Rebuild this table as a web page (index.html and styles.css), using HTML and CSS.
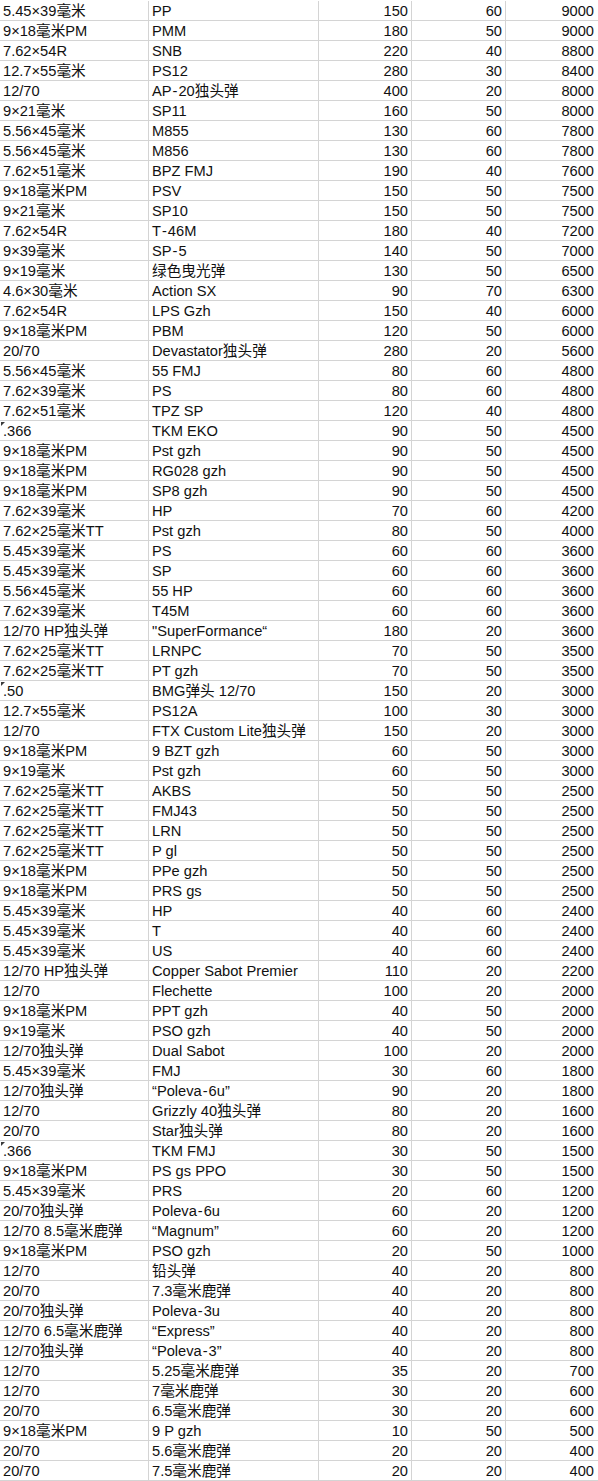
FILE: index.html
```html
<!DOCTYPE html>
<html lang="zh">
<head>
<meta charset="utf-8">
<title>弹药表</title>
<link rel="stylesheet" href="styles.css">
</head>
<body>
<div class="sheet">
<div class="row"><div class="t">5.45×39毫米</div><div class="t b">PP</div><div class="n">150</div><div class="n">60</div><div class="n e">9000</div></div>
<div class="row"><div class="t">9×18毫米PM</div><div class="t b">PMM</div><div class="n">180</div><div class="n">50</div><div class="n e">9000</div></div>
<div class="row"><div class="t">7.62×54R</div><div class="t b">SNB</div><div class="n">220</div><div class="n">40</div><div class="n e">8800</div></div>
<div class="row"><div class="t">12.7×55毫米</div><div class="t b">PS12</div><div class="n">280</div><div class="n">30</div><div class="n e">8400</div></div>
<div class="row"><div class="t">12/70</div><div class="t b">AP<span class="h">-</span>20独头弹</div><div class="n">400</div><div class="n">20</div><div class="n e">8000</div></div>
<div class="row"><div class="t">9×21毫米</div><div class="t b">SP11</div><div class="n">160</div><div class="n">50</div><div class="n e">8000</div></div>
<div class="row"><div class="t">5.56×45毫米</div><div class="t b">M855</div><div class="n">130</div><div class="n">60</div><div class="n e">7800</div></div>
<div class="row"><div class="t">5.56×45毫米</div><div class="t b">M856</div><div class="n">130</div><div class="n">60</div><div class="n e">7800</div></div>
<div class="row"><div class="t">7.62×51毫米</div><div class="t b">BPZ FMJ</div><div class="n">190</div><div class="n">40</div><div class="n e">7600</div></div>
<div class="row"><div class="t">9×18毫米PM</div><div class="t b">PSV</div><div class="n">150</div><div class="n">50</div><div class="n e">7500</div></div>
<div class="row"><div class="t">9×21毫米</div><div class="t b">SP10</div><div class="n">150</div><div class="n">50</div><div class="n e">7500</div></div>
<div class="row"><div class="t">7.62×54R</div><div class="t b">T<span class="h">-</span>46M</div><div class="n">180</div><div class="n">40</div><div class="n e">7200</div></div>
<div class="row"><div class="t">9×39毫米</div><div class="t b">SP<span class="h">-</span>5</div><div class="n">140</div><div class="n">50</div><div class="n e">7000</div></div>
<div class="row"><div class="t">9×19毫米</div><div class="t b">绿色曳光弹</div><div class="n">130</div><div class="n">50</div><div class="n e">6500</div></div>
<div class="row"><div class="t">4.6×30毫米</div><div class="t b">Action SX</div><div class="n">90</div><div class="n">70</div><div class="n e">6300</div></div>
<div class="row"><div class="t">7.62×54R</div><div class="t b">LPS Gzh</div><div class="n">150</div><div class="n">40</div><div class="n e">6000</div></div>
<div class="row"><div class="t">9×18毫米PM</div><div class="t b">PBM</div><div class="n">120</div><div class="n">50</div><div class="n e">6000</div></div>
<div class="row"><div class="t">20/70</div><div class="t b">Devastator独头弹</div><div class="n">280</div><div class="n">20</div><div class="n e">5600</div></div>
<div class="row"><div class="t">5.56×45毫米</div><div class="t b">55 FMJ</div><div class="n">80</div><div class="n">60</div><div class="n e">4800</div></div>
<div class="row"><div class="t">7.62×39毫米</div><div class="t b">PS</div><div class="n">80</div><div class="n">60</div><div class="n e">4800</div></div>
<div class="row"><div class="t">7.62×51毫米</div><div class="t b">TPZ SP</div><div class="n">120</div><div class="n">40</div><div class="n e">4800</div></div>
<div class="row"><div class="t flag">.366</div><div class="t b">TKM EKO</div><div class="n">90</div><div class="n">50</div><div class="n e">4500</div></div>
<div class="row"><div class="t">9×18毫米PM</div><div class="t b">Pst gzh</div><div class="n">90</div><div class="n">50</div><div class="n e">4500</div></div>
<div class="row"><div class="t">9×18毫米PM</div><div class="t b">RG028 gzh</div><div class="n">90</div><div class="n">50</div><div class="n e">4500</div></div>
<div class="row"><div class="t">9×18毫米PM</div><div class="t b">SP8 gzh</div><div class="n">90</div><div class="n">50</div><div class="n e">4500</div></div>
<div class="row"><div class="t">7.62×39毫米</div><div class="t b">HP</div><div class="n">70</div><div class="n">60</div><div class="n e">4200</div></div>
<div class="row"><div class="t">7.62×25毫米TT</div><div class="t b">Pst gzh</div><div class="n">80</div><div class="n">50</div><div class="n e">4000</div></div>
<div class="row"><div class="t">5.45×39毫米</div><div class="t b">PS</div><div class="n">60</div><div class="n">60</div><div class="n e">3600</div></div>
<div class="row"><div class="t">5.45×39毫米</div><div class="t b">SP</div><div class="n">60</div><div class="n">60</div><div class="n e">3600</div></div>
<div class="row"><div class="t">5.56×45毫米</div><div class="t b">55 HP</div><div class="n">60</div><div class="n">60</div><div class="n e">3600</div></div>
<div class="row"><div class="t">7.62×39毫米</div><div class="t b">T45M</div><div class="n">60</div><div class="n">60</div><div class="n e">3600</div></div>
<div class="row"><div class="t">12/70 HP独头弹</div><div class="t b">"SuperFormance“</div><div class="n">180</div><div class="n">20</div><div class="n e">3600</div></div>
<div class="row"><div class="t">7.62×25毫米TT</div><div class="t b">LRNPC</div><div class="n">70</div><div class="n">50</div><div class="n e">3500</div></div>
<div class="row"><div class="t">7.62×25毫米TT</div><div class="t b">PT gzh</div><div class="n">70</div><div class="n">50</div><div class="n e">3500</div></div>
<div class="row"><div class="t flag">.50</div><div class="t b">BMG弹头 12/70</div><div class="n">150</div><div class="n">20</div><div class="n e">3000</div></div>
<div class="row"><div class="t">12.7×55毫米</div><div class="t b">PS12A</div><div class="n">100</div><div class="n">30</div><div class="n e">3000</div></div>
<div class="row"><div class="t">12/70</div><div class="t b">FTX Custom Lite独头弹</div><div class="n">150</div><div class="n">20</div><div class="n e">3000</div></div>
<div class="row"><div class="t">9×18毫米PM</div><div class="t b">9 BZT gzh</div><div class="n">60</div><div class="n">50</div><div class="n e">3000</div></div>
<div class="row"><div class="t">9×19毫米</div><div class="t b">Pst gzh</div><div class="n">60</div><div class="n">50</div><div class="n e">3000</div></div>
<div class="row"><div class="t">7.62×25毫米TT</div><div class="t b">AKBS</div><div class="n">50</div><div class="n">50</div><div class="n e">2500</div></div>
<div class="row"><div class="t">7.62×25毫米TT</div><div class="t b">FMJ43</div><div class="n">50</div><div class="n">50</div><div class="n e">2500</div></div>
<div class="row"><div class="t">7.62×25毫米TT</div><div class="t b">LRN</div><div class="n">50</div><div class="n">50</div><div class="n e">2500</div></div>
<div class="row"><div class="t">7.62×25毫米TT</div><div class="t b">P gl</div><div class="n">50</div><div class="n">50</div><div class="n e">2500</div></div>
<div class="row"><div class="t">9×18毫米PM</div><div class="t b">PPe gzh</div><div class="n">50</div><div class="n">50</div><div class="n e">2500</div></div>
<div class="row"><div class="t">9×18毫米PM</div><div class="t b">PRS gs</div><div class="n">50</div><div class="n">50</div><div class="n e">2500</div></div>
<div class="row"><div class="t">5.45×39毫米</div><div class="t b">HP</div><div class="n">40</div><div class="n">60</div><div class="n e">2400</div></div>
<div class="row"><div class="t">5.45×39毫米</div><div class="t b">T</div><div class="n">40</div><div class="n">60</div><div class="n e">2400</div></div>
<div class="row"><div class="t">5.45×39毫米</div><div class="t b">US</div><div class="n">40</div><div class="n">60</div><div class="n e">2400</div></div>
<div class="row"><div class="t">12/70 HP独头弹</div><div class="t b">Copper Sabot Premier</div><div class="n">110</div><div class="n">20</div><div class="n e">2200</div></div>
<div class="row"><div class="t">12/70</div><div class="t b">Flechette</div><div class="n">100</div><div class="n">20</div><div class="n e">2000</div></div>
<div class="row"><div class="t">9×18毫米PM</div><div class="t b">PPT gzh</div><div class="n">40</div><div class="n">50</div><div class="n e">2000</div></div>
<div class="row"><div class="t">9×19毫米</div><div class="t b">PSO gzh</div><div class="n">40</div><div class="n">50</div><div class="n e">2000</div></div>
<div class="row"><div class="t">12/70独头弹</div><div class="t b">Dual Sabot</div><div class="n">100</div><div class="n">20</div><div class="n e">2000</div></div>
<div class="row"><div class="t">5.45×39毫米</div><div class="t b">FMJ</div><div class="n">30</div><div class="n">60</div><div class="n e">1800</div></div>
<div class="row"><div class="t">12/70独头弹</div><div class="t b">“Poleva<span class="h">-</span>6u”</div><div class="n">90</div><div class="n">20</div><div class="n e">1800</div></div>
<div class="row"><div class="t">12/70</div><div class="t b">Grizzly 40独头弹</div><div class="n">80</div><div class="n">20</div><div class="n e">1600</div></div>
<div class="row"><div class="t">20/70</div><div class="t b">Star独头弹</div><div class="n">80</div><div class="n">20</div><div class="n e">1600</div></div>
<div class="row"><div class="t flag">.366</div><div class="t b">TKM FMJ</div><div class="n">30</div><div class="n">50</div><div class="n e">1500</div></div>
<div class="row"><div class="t">9×18毫米PM</div><div class="t b">PS gs PPO</div><div class="n">30</div><div class="n">50</div><div class="n e">1500</div></div>
<div class="row"><div class="t">5.45×39毫米</div><div class="t b">PRS</div><div class="n">20</div><div class="n">60</div><div class="n e">1200</div></div>
<div class="row"><div class="t">20/70独头弹</div><div class="t b">Poleva<span class="h">-</span>6u</div><div class="n">60</div><div class="n">20</div><div class="n e">1200</div></div>
<div class="row"><div class="t">12/70 8.5毫米鹿弹</div><div class="t b">“Magnum”</div><div class="n">60</div><div class="n">20</div><div class="n e">1200</div></div>
<div class="row"><div class="t">9×18毫米PM</div><div class="t b">PSO gzh</div><div class="n">20</div><div class="n">50</div><div class="n e">1000</div></div>
<div class="row"><div class="t">12/70</div><div class="t b">铅头弹</div><div class="n">40</div><div class="n">20</div><div class="n e">800</div></div>
<div class="row"><div class="t">20/70</div><div class="t b">7.3毫米鹿弹</div><div class="n">40</div><div class="n">20</div><div class="n e">800</div></div>
<div class="row"><div class="t">20/70独头弹</div><div class="t b">Poleva<span class="h">-</span>3u</div><div class="n">40</div><div class="n">20</div><div class="n e">800</div></div>
<div class="row"><div class="t">12/70 6.5毫米鹿弹</div><div class="t b">“Express”</div><div class="n">40</div><div class="n">20</div><div class="n e">800</div></div>
<div class="row"><div class="t">12/70独头弹</div><div class="t b">“Poleva<span class="h">-</span>3”</div><div class="n">40</div><div class="n">20</div><div class="n e">800</div></div>
<div class="row"><div class="t">12/70</div><div class="t b">5.25毫米鹿弹</div><div class="n">35</div><div class="n">20</div><div class="n e">700</div></div>
<div class="row"><div class="t">12/70</div><div class="t b">7毫米鹿弹</div><div class="n">30</div><div class="n">20</div><div class="n e">600</div></div>
<div class="row"><div class="t">20/70</div><div class="t b">6.5毫米鹿弹</div><div class="n">30</div><div class="n">20</div><div class="n e">600</div></div>
<div class="row"><div class="t">9×18毫米PM</div><div class="t b">9 P gzh</div><div class="n">10</div><div class="n">50</div><div class="n e">500</div></div>
<div class="row"><div class="t">20/70</div><div class="t b">5.6毫米鹿弹</div><div class="n">20</div><div class="n">20</div><div class="n e">400</div></div>
<div class="row"><div class="t">20/70</div><div class="t b">7.5毫米鹿弹</div><div class="n">20</div><div class="n">20</div><div class="n e">400</div></div>
</div>
</body>
</html>
```
FILE: styles.css
```css
html, body {
  margin: 0;
  padding: 0;
  background: #ffffff;
}
.sheet {
  width: 598px;
  padding-top: 1px;
  font-family: "Liberation Sans", "Noto Sans CJK SC", sans-serif;
  font-size: 14.67px;
  color: #111111;
}
.row {
  display: grid;
  grid-template-columns: 149px 170px 93px 94px 92px;
  height: 20px;
  box-sizing: border-box;
  border-bottom: 1px solid #d4d4d4;
}
.t, .n {
  box-sizing: border-box;
  border-right: 1px solid #d4d4d4;
  padding-top: 2px;
  line-height: 17px;
  height: 19px;
  white-space: nowrap;
  overflow: hidden;
  position: relative;
}
.t {
  text-align: left;
  padding-left: 3px;
}
.b {
  padding-left: 3px;
}
.n {
  text-align: right;
  padding-right: 3px;
}
.e {
  border-right: none;
  padding-right: 4px;
}
.h {
  padding: 0 1px;
}
.flag::before {
  content: "";
  position: absolute;
  left: 1px;
  top: 1px;
  width: 0;
  height: 0;
  border-top: 4px solid #3a3a3a;
  border-right: 4px solid transparent;
}
```
